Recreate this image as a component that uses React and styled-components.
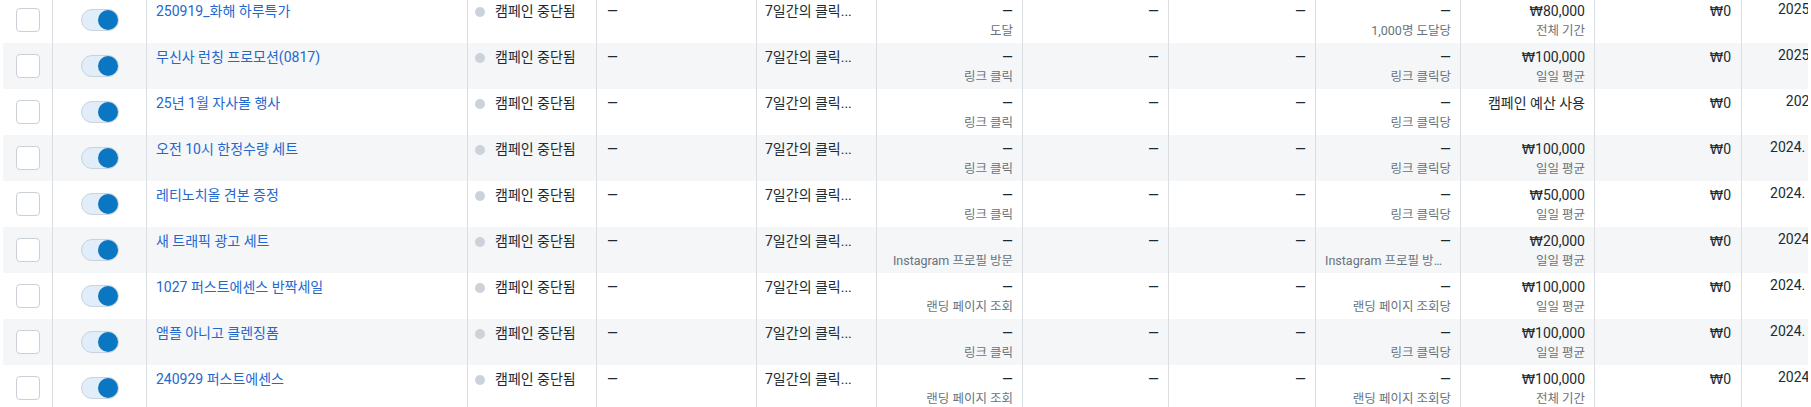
import React from 'react'
import styled, { createGlobalStyle } from 'styled-components'

const GlobalStyle = createGlobalStyle`
  body {
    margin: 0;
    background: #fff;
    font-family: Roboto, "Noto Sans CJK KR", sans-serif;
    color: #1c2b33;
    -webkit-font-smoothing: antialiased;
  }
`

const Table = styled.div`
  margin: -3px 3px 0;
  overflow: hidden;
`

const Row = styled.div`
  display: grid;
  grid-template-columns: 50px 94px 321px 129px 160px 120px 146px 146px 147px 145px 134px 147px 119px;
  height: 46px;
  background: ${(p) => (p.$alt ? '#f5f6f7' : '#fff')};
`

const Cell = styled.div`
  box-sizing: border-box;
  min-width: 0;
  overflow: hidden;
  border-right: 1px solid #dadde1;
  padding: ${(p) => p.$pad || '5px 9px 0'};
  text-align: ${(p) => p.$align || 'left'};
`

const CenterCell = styled(Cell)`
  display: flex;
  align-items: center;
  justify-content: center;
  padding: 0;
`

const Checkbox = styled.span`
  display: block;
  box-sizing: border-box;
  width: 24px;
  height: 24px;
  border: 1px solid #cbd0d6;
  border-radius: 4px;
  background: #fff;
`

const Toggle = styled.span`
  display: flex;
  justify-content: flex-end;
  box-sizing: border-box;
  width: 38px;
  height: 22px;
  border: 1px solid #c8d3dd;
  border-radius: 11px;
  background: #e1edf8;
`

const Knob = styled.span`
  width: 20px;
  height: 20px;
  border-radius: 50%;
  background: #0b76c1;
`

const NameLink = styled.a`
  display: block;
  font-size: 14px;
  line-height: 19px;
  color: #2468cf;
  text-decoration: none;
  white-space: nowrap;
`

const Status = styled.div`
  display: flex;
  align-items: center;
  gap: 10px;
  font-size: 14px;
  line-height: 19px;
  white-space: nowrap;
`

const Dot = styled.span`
  width: 10px;
  height: 10px;
  border-radius: 50%;
  background: #cbd2d9;
  flex: none;
`

const Main = styled.div`
  font-size: 14px;
  line-height: 19px;
  color: #1c2b33;
  white-space: nowrap;
  overflow: hidden;
`

const Won = styled.span`
  font-family: "DejaVu Sans", sans-serif;
  font-size: 13.5px;
`

const Sub = styled.div`
  margin-top: 2px;
  font-size: 12.5px;
  line-height: 16px;
  color: #67737d;
  white-space: nowrap;
  overflow: hidden;
  text-overflow: ellipsis;
`

const rows = [
  { name: '250919_화해 하루특가', result: '도달', cost: '1,000명 도달당', budget: '80,000', period: '전체 기간', date: '2025. 9. 19.' },
  { name: '무신사 런칭 프로모션(0817)', result: '링크 클릭', cost: '링크 클릭당', budget: '100,000', period: '일일 평균', date: '2025. 8. 17.' },
  { name: '25년 1월 자사몰 행사', result: '링크 클릭', cost: '링크 클릭당', label: '캠페인 예산 사용', date: '2025. 1. 6.' },
  { name: '오전 10시 한정수량 세트', result: '링크 클릭', cost: '링크 클릭당', budget: '100,000', period: '일일 평균', date: '2024. 10. 31.' },
  { name: '레티노치올 견본 증정', result: '링크 클릭', cost: '링크 클릭당', budget: '50,000', period: '일일 평균', date: '2024. 10. 24.' },
  { name: '새 트래픽 광고 세트', result: 'Instagram 프로필 방문', cost: 'Instagram 프로필 방문당', budget: '20,000', period: '일일 평균', date: '2024. 9. 30.' },
  { name: '1027 퍼스트에센스 반짝세일', result: '랜딩 페이지 조회', cost: '랜딩 페이지 조회당', budget: '100,000', period: '일일 평균', date: '2024. 10. 27.' },
  { name: '앰플 아니고 클렌징폼', result: '링크 클릭', cost: '링크 클릭당', budget: '100,000', period: '일일 평균', date: '2024. 10. 15.' },
  { name: '240929 퍼스트에센스', result: '랜딩 페이지 조회', cost: '랜딩 페이지 조회당', budget: '100,000', period: '전체 기간', date: '2024. 9. 29.' },
]

const App = () => {
  return (
    <>
      <GlobalStyle />
      <Table>
        {rows.map((r, i) => (
          <Row key={r.name} $alt={i % 2 === 1}>
            <CenterCell>
              <Checkbox />
            </CenterCell>
            <CenterCell>
              <Toggle>
                <Knob />
              </Toggle>
            </CenterCell>
            <Cell>
              <NameLink href='#'>{r.name}</NameLink>
            </Cell>
            <Cell $pad='5px 4px 0 7px'>
              <Status>
                <Dot />
                캠페인 중단됨
              </Status>
            </Cell>
            <Cell $pad='5px 4px 0 10px'>
              <Main>—</Main>
            </Cell>
            <Cell $pad='5px 2px 0 8px'>
              <Main>7일간의 클릭...</Main>
            </Cell>
            <Cell $align='right'>
              <Main>—</Main>
              <Sub>{r.result}</Sub>
            </Cell>
            <Cell $align='right'>
              <Main>—</Main>
            </Cell>
            <Cell $align='right'>
              <Main>—</Main>
            </Cell>
            <Cell $align='right'>
              <Main>—</Main>
              <Sub>{r.cost}</Sub>
            </Cell>
            <Cell $align='right'>
              {r.budget ? (
                <>
                  <Main>
                    <Won>₩</Won>
                    {r.budget}
                  </Main>
                  <Sub>{r.period}</Sub>
                </>
              ) : (
                <Main>{r.label}</Main>
              )}
            </Cell>
            <Cell $align='right' $pad='5px 10px 0'>
              <Main>
                <Won>₩</Won>0
              </Main>
            </Cell>
            <Cell $align='right' $pad='3px 9px 0'>
              <Main>{r.date}</Main>
            </Cell>
          </Row>
        ))}
      </Table>
    </>
  )
}

export default App
